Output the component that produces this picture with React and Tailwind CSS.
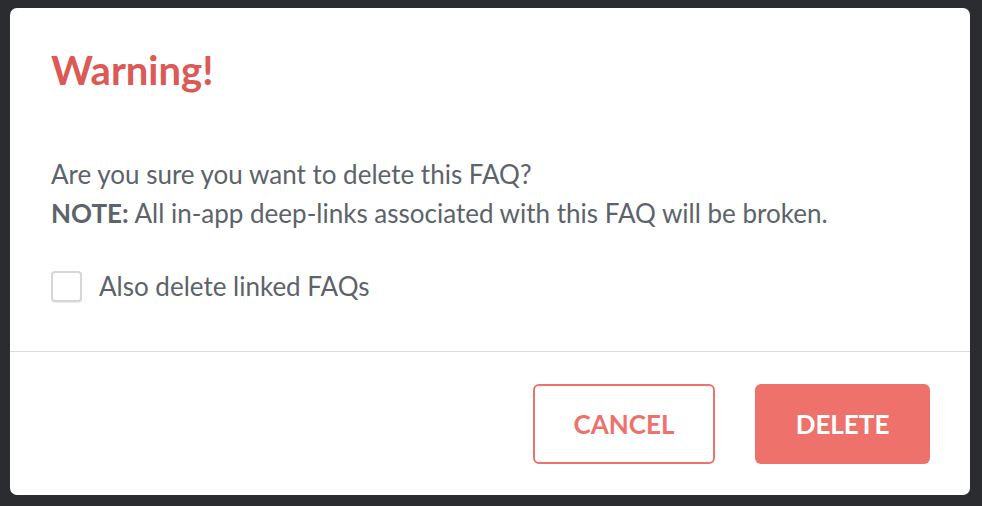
import React, { useState } from "react";

// Confirm-delete modal over a dimmed backdrop
export default function App() {
  const [alsoLinked, setAlsoLinked] = useState(false);

  return (
    <div
      className="w-[982px] h-[506px] bg-[#2a2c30] pt-[8px] pl-[10px]"
      style={{ fontFamily: "Lato, 'Open Sans', sans-serif" }}
    >
      <div className="w-[960px] h-[487px] bg-white rounded-[7px] flex flex-col">
        <div className="px-[41px] pt-[38px]">
          <h2 className="text-[40px] leading-[48px] font-bold text-[#dc5a55]">Warning!</h2>
          <div className="mt-[61px] text-[26px] leading-[39px] text-[#5c636b]">
            <p>Are you sure you want to delete this FAQ?</p>
            <p>
              <span className="font-bold">NOTE:</span> All in-app deep-links associated with this FAQ will be broken.
            </p>
          </div>
          <label className="mt-[38px] flex items-center gap-[17px] text-[26px] leading-[31px] text-[#5c636b] cursor-pointer">
            <button
              type="button"
              onClick={() => setAlsoLinked((v) => !v)}
              className="w-[31px] h-[31px] rounded-[4px] border-2 border-[#d6d6d6] bg-white shadow-[0_1px_1px_rgba(0,0,0,0.08)]"
            />
            <span>Also delete linked FAQs</span>
          </label>
        </div>
        <div className="mt-[49px] border-t border-[#dcdcdc] flex justify-end gap-[40px] pt-[32px] pr-[40px]">
          <button className="w-[182px] h-[80px] rounded-[6px] border-2 border-[#ee716b] text-[#ee716b] text-[26px] font-bold">
            CANCEL
          </button>
          <button className="w-[175px] h-[80px] rounded-[6px] bg-[#ee716b] text-white text-[26px] font-bold">
            DELETE
          </button>
        </div>
      </div>
    </div>
  );
}
